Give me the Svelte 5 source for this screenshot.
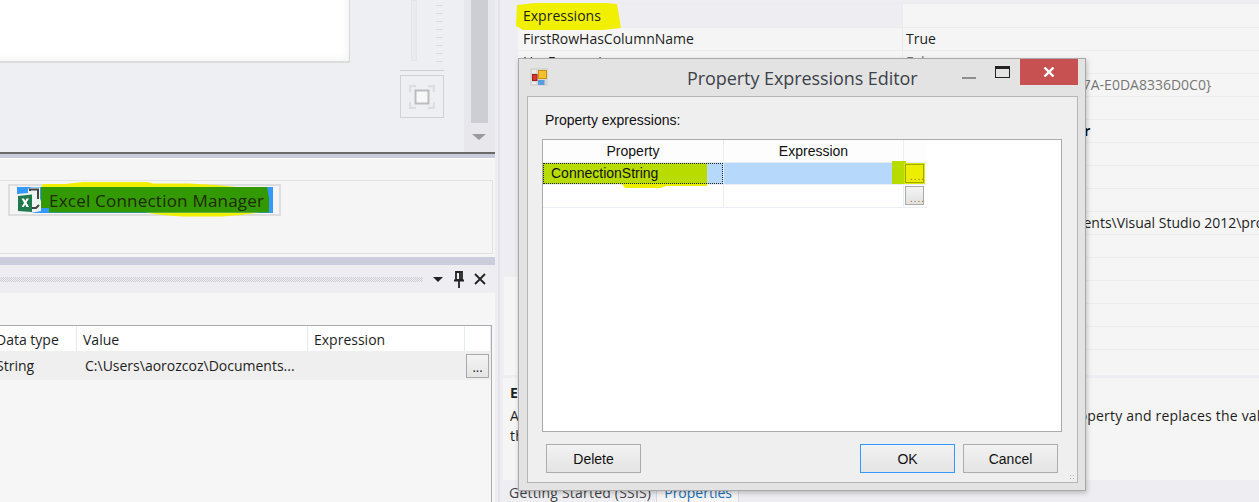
<script>
	const props = [
		{ name: 'Expressions', value: '', cat: true },
		{ name: 'FirstRowHasColumnName', value: 'True' },
		{ name: 'HasExpressions', value: 'False', dim: true },
		{ name: '', value: '{6C2F7B10-93D4-4E1B-A77A-E0DA8336D0C0}', dim: true, shift: true },
		{ name: '', value: '' },
		{ name: '', value: 'Excel Connection Manager', bold: true },
		{ name: '', value: '' },
		{ name: '', value: '' },
		{ name: '', value: '' },
		{ name: '', value: 'C:\\Users\\aorozcoz\\Documents\\Visual Studio 2012\\projects\\Integration', shift: true },
		{ name: '', value: '' },
		{ name: '', value: '' },
		{ name: '', value: '' },
		{ name: '', value: '' },
		{ name: '', value: '' },
		{ name: '', value: '' }
	];
</script>

<div class="page">
	<section class="left">
		<div class="designer">
			<div class="canvas-area">
				<div class="canvas"></div>
			</div>
			<div class="zoom-rail">
				<div class="slider"><span class="track"></span><span class="ticks"></span></div>
				<div class="zoom-btn">
					<svg width="26" height="24" viewBox="0 0 26 24">
						<path d="M1 7V1h6M19 1h6v6M25 17v6h-6M7 23H1v-6" fill="none" stroke="#dcdde0" stroke-width="2.5" />
						<rect x="6.5" y="5.5" width="13" height="13" fill="#f8f8f8" stroke="#bcbdc1" stroke-width="2" />
					</svg>
				</div>
			</div>
			<div class="vscroll">
				<div class="thumb"></div>
				<div class="arrow"></div>
			</div>
		</div>
		<div class="split-bar"></div>
		<div class="tray">
			<div class="tray-inner">
				<div class="tray-item">
					<div class="tray-sel">
						<svg class="xl" width="24" height="26" viewBox="0 0 24 26">
							<path d="M0 7L11 6V2L14 0.500H23V12L24 14V24L14 26H0Z" fill="#eef3f1" />
							<path d="M13 4V2.500h8V12M15 21h4l3-3" fill="none" stroke="#444" stroke-width="2" />
							<path d="M1 9L15 7.500V25L1 24Z" fill="#1f7a4d" />
							<path d="M4.500 11.500h2.500l1.200 2.300 1.300-2.300H12l-2.500 4 2.500 4.500H9.500L8.200 17.500 6.800 20H4.500L7 15.700z" fill="#fff" />
						</svg>
						<div class="tray-label">
							<svg class="marker" width="232" height="36" viewBox="0 0 232 36">
								<path d="M0 5L2 2H24L42 0H107L112 1.500H148L175 3 195 5Z" fill="#f0f000" />
								<path d="M104 30.500H219L200 33 181 34.500H141L121 33Z" fill="#f0f000" />
								<path d="M0 5H226L228 16V30.500H8V26H0Z" fill="#339900" />
							</svg>
							<span>Excel Connection Manager</span>
						</div>
					</div>
				</div>
			</div>
		</div>
		<div class="split-bar thick"></div>
		<div class="panel-head">
			<div class="grip"></div>
			<span class="drop"></span>
			<svg width="12" height="17" viewBox="0 0 12 17"><path d="M3 1h6v8H3zM1 9.500h10M6 10v7M7 2v7" fill="none" stroke="#222" stroke-width="1.800" /></svg>
			<svg width="12" height="12" viewBox="0 0 12 12"><path d="M1 1l10 10M11 1L1 11" stroke="#222" stroke-width="1.800" /></svg>
		</div>
		<div class="panel-body">
			<div class="var-grid">
				<div class="var-head">
					<div class="c1">Data type</div>
					<div class="c2">Value</div>
					<div class="c3">Expression</div>
					<div class="c4"></div>
				</div>
				<div class="var-row">
					<div class="c1">String</div>
					<div class="c2">C:\Users\aorozcoz\Documents...</div>
					<div class="c3"></div>
					<div class="c4"><button class="dots">...</button></div>
				</div>
			</div>
		</div>
	</section>

	<section class="right">
		<div class="grid">
			{#each props as p}
				<div class="prop" class:cat={p.cat}>
					<div class="pname">
						{#if p.cat}
							<svg class="cat-mark" width="108" height="28" viewBox="0 0 108 28">
								<path d="M2 3L20 1H90L102 2 106 26 88 28H8L1 24Z" fill="#f0f000" />
							</svg>
						{/if}
						<span>{p.name}</span>
					</div>
					<div class="pval" class:dim={p.dim} class:bold={p.bold} class:shift={p.shift}>{p.value}</div>
				</div>
			{/each}
		</div>
		<div class="desc">
			<strong>Expressions</strong>
			<p>A property expression updates values of the property at run time. It evaluates this property and replaces the value</p>
			<p>that was set for the property when the package runs.</p>
		</div>
		<div class="tabs">
			<span class="tab">Getting Started (SSIS)</span>
			<span class="tab active">Properties</span>
		</div>
	</section>

	<div class="dialog">
		<header class="titlebar">
			<svg class="app-icon" width="18" height="18" viewBox="0 0 18 18">
				<rect width="18" height="18" fill="#d6d6d6" />
				<rect x="2" y="2" width="4" height="3" fill="#ececec" />
				<rect x="2" y="14" width="4" height="2" fill="#ececec" />
				<rect x="8.500" y="2.500" width="8" height="8" fill="#f5c02c" stroke="#c8920c" />
				<rect x="2.500" y="6.500" width="4.500" height="6" fill="#d8352c" stroke="#a02018" />
				<rect x="8" y="12" width="6.500" height="5" fill="#5b9be0" />
			</svg>
			<h2>Property Expressions Editor</h2>
			<div class="win-btns">
				<span class="min"></span>
				<span class="max"></span>
				<button class="close">
					<svg width="12" height="10" viewBox="0 0 12 10"><path d="M1.500 0.500l9 9M10.500 0.500l-9 9" stroke="#fff" stroke-width="2.400" /></svg>
				</button>
			</div>
		</header>
		<div class="dlg-body">
			<label for="exprs">Property expressions:</label>
			<div class="expr-table" id="exprs">
				<div class="erow ehead">
					<div class="e1">Property</div>
					<div class="e2">Expression</div>
					<div class="e3"></div>
				</div>
				<div class="erow esel">
					<div class="e1 selcell">
						<span class="lime"></span>
						<span class="ring"></span>
						<span class="etext">ConnectionString</span>
					</div>
					<div class="e2 blue"><span class="lime-end"></span></div>
					<div class="e3"><button class="ell hot">....</button></div>
				</div>
				<div class="erow">
					<div class="e1"></div>
					<div class="e2"></div>
					<div class="e3"><button class="ell">....</button></div>
				</div>
			</div>
			<div class="dlg-actions">
				<button class="btn">Delete</button>
				<div class="spacer"></div>
				<button class="btn primary">OK</button>
				<button class="btn">Cancel</button>
			</div>
			<div class="resize"></div>
		</div>
	</div>
</div>

<style>
	:global(body) {
		margin: 0;
		background: #eeeef2;
	}

	.page {
		position: relative;
		display: flex;
		width: 1259px;
		height: 502px;
		overflow: hidden;
		font-family: 'Open Sans', sans-serif;
		font-size: 13px;
		color: #1e1e1e;
	}

	.left {
		width: 495px;
		flex: none;
		display: flex;
		flex-direction: column;
		background: #f5f5f5;
	}

	.designer {
		height: 152px;
		flex: none;
		display: flex;
		background: #eeeff2;
		border-bottom: 2px solid #6a6a6a;
	}

	.canvas-area {
		width: 400px;
		flex: none;
	}

	.canvas {
		width: 349px;
		height: 61px;
		background: #fff;
		border-right: 1px solid #d9d9d9;
		border-bottom: 2px solid #dcdcdc;
		box-shadow: inset -8px -8px 8px -8px #eeeeee;
	}

	.zoom-rail {
		width: 44px;
		flex: none;
		display: flex;
		flex-direction: column;
	}

	.slider {
		height: 62px;
		display: flex;
		justify-content: space-between;
		padding: 0 1px 8px 11px;
		border-bottom: 1px solid #cfd0d3;
		margin-bottom: 4px;
	}

	.track {
		width: 6px;
		height: 61px;
		background: #e9ebec;
		border: 1px solid #e3e6e6;
		box-sizing: border-box;
	}

	.ticks {
		width: 7px;
		height: 62px;
		background: repeating-linear-gradient(to top, #dcdcdc 0 1px, transparent 1px 8px);
	}

	.zoom-btn {
		height: 41px;
		width: 42px;
		border: 1px solid #d0d1d4;
		display: flex;
		align-items: center;
		justify-content: center;
	}

	.vscroll {
		margin-left: 20px;
		width: 31px;
		flex: none;
		background: #e8e8ec;
		padding: 0 7px;
		box-sizing: border-box;
	}

	.thumb {
		height: 123px;
		background: #cdced3;
	}

	.arrow {
		width: 0;
		margin: 11px 0 0 1px;
		border: 7px solid transparent;
		border-top: 6px solid #9a9a9e;
		border-bottom: 0;
	}

	.split-bar {
		height: 4px;
		flex: none;
		background: #c8ccdb;
		border-bottom: 1px solid #fff;
	}

	.split-bar.thick {
		height: 8px;
		border-bottom: 0;
		background: #cbcddd;
	}

	.tray {
		height: 98px;
		flex: none;
		padding-top: 21px;
		box-sizing: border-box;
	}

	.tray-inner {
		height: 74px;
		width: 493px;
		box-sizing: border-box;
		border: 1px solid #e2e2e2;
		border-left: 0;
		padding: 3px 0 0 8px;
	}

	.tray-item {
		width: 273px;
		height: 32px;
		box-sizing: border-box;
		border: 2px solid #dedede;
		padding: 1px 6px 0 7px;
	}

	.tray-sel {
		height: 26px;
		background: #3399ff;
		display: flex;
	}

	.xl {
		flex: none;
	}

	.tray-label {
		position: relative;
		font-size: 17px;
		line-height: 27px;
		padding-left: 8px;
		color: #1f2a00;
		white-space: nowrap;
		letter-spacing: 0.22px;
	}

	.tray-label span {
		position: relative;
	}

	.marker {
		position: absolute;
		left: 0;
		top: -5px;
	}

	.panel-head {
		height: 28px;
		flex: none;
		display: flex;
		align-items: center;
		background: #eeeef2;
		padding-right: 9px;
		gap: 9px;
	}

	.grip {
		width: 423px;
		height: 5px;
		margin-right: auto;
		background: repeating-conic-gradient(#cfd0d5 0 25%, transparent 0 50%) 0 0 / 2px 2px;
	}

	.drop {
		margin-right: 1px;
		border: 5px solid transparent;
		border-top: 5px solid #222;
		border-bottom: 0;
	}

	.panel-body {
		flex: 1;
		background: #f6f6f6;
		padding-top: 32px;
		min-height: 0;
	}

	.var-grid {
		width: 492px;
		height: 200px;
		box-sizing: border-box;
		border: 1px solid #ababab;
		border-left: 0;
		font-size: 14px;
	}

	.var-head,
	.var-row {
		display: flex;
	}

	.var-head {
		height: 25px;
		background: #fff;
		line-height: 27px;
	}

	.var-head > div {
		border-right: 1px solid #e4ecf6;
	}

	.var-row {
		height: 29px;
		background: #efefef;
		line-height: 29px;
	}

	.c1 {
		width: 76px;
		text-indent: -4px;
		white-space: nowrap;
		overflow: hidden;
	}

	.c2 {
		width: 231px;
		padding-left: 6px;
		box-sizing: border-box;
		white-space: nowrap;
	}

	.var-row .c2 {
		padding-left: 9px;
	}

	.c3 {
		width: 157px;
		padding-left: 6px;
		box-sizing: border-box;
	}

	.c4 {
		flex: 1;
	}

	.dots {
		display: block;
		width: 23px;
		height: 24px;
		margin: 3px 0 0 2px;
		padding: 0;
		border: 1px solid #a9a9a9;
		background: linear-gradient(#f4f4f4, #e4e4e4);
		font: 13px/24px 'Open Sans', sans-serif;
		color: #222;
	}

	.right {
		flex: 1;
		min-width: 0;
		display: flex;
		flex-direction: column;
		background: linear-gradient(to right, #eeeef2 3px, #e3e3eb 3px 5px, #eeeef2 5px);
		padding-left: 9px;
	}

	.grid {
		height: 375px;
		flex: none;
		padding: 3px 0 0 14px;
		box-sizing: border-box;
		background: linear-gradient(#eeeef2 277px, #f5f5f5 277px);
		overflow: hidden;
	}

	.prop {
		display: flex;
		height: 23px;
		box-sizing: border-box;
		border-top: 1px solid #ececee;
		background: #f5f5f5;
		line-height: 22px;
		font-size: 14px;
		white-space: nowrap;
	}

	.prop.cat {
		height: 24px;
		line-height: 24px;
	}

	.prop.cat .pname {
		background: #eeeef2;
	}

	.pname {
		position: relative;
		width: 385px;
		flex: none;
		padding-left: 5px;
		box-sizing: border-box;
		border-right: 1px solid #ececee;
	}

	.pname span {
		position: relative;
	}

	.cat-mark {
		position: absolute;
		left: -3px;
		top: -2px;
	}

	.pval {
		padding-left: 3px;
	}

	.pval.shift {
		padding-left: 10px;
	}

	.pval.dim {
		color: #777;
	}

	.pval.dim.shift {
		padding-left: 12px;
	}

	.pval.bold {
		font-weight: 700;
		color: #111;
	}

	.desc {
		margin-top: 3px;
		height: 102px;
		flex: none;
		background: #f5f5f5;
		padding: 5px 0 0 7px;
		margin-left: -1px;
		box-sizing: border-box;
		font-size: 14px;
		white-space: nowrap;
		overflow: hidden;
	}

	.desc strong {
		display: block;
		line-height: 20px;
		margin-bottom: 3px;
	}

	.desc p {
		margin: 0;
		line-height: 20px;
		letter-spacing: 0.2px;
	}

	.tabs {
		flex: 1;
		display: flex;
		padding-left: 6px;
		margin-left: -1px;
		font-size: 14px;
	}

	.tab {
		padding: 3px 5px 0 0;
		color: #444;
		white-space: nowrap;
		letter-spacing: 0.2px;
	}

	.tab.active {
		padding: 3px 6px 0 7px;
		background: #f5f5f5;
		color: #1a6fb5;
		border: 1px solid #d8d8de;
		border-top: 0;
		letter-spacing: 0;
	}

	.dialog {
		position: absolute;
		left: 518px;
		top: 58px;
		width: 568px;
		height: 433px;
		box-sizing: border-box;
		background: #e3e3e3;
		border: 1px solid #a8a8a8;
		box-shadow: 1px 2px 5px rgba(0, 0, 0, 0.22);
		display: flex;
		flex-direction: column;
		padding: 0 7px 7px 8px;
		font-family: 'Liberation Sans', sans-serif;
		font-size: 14px;
	}

	.titlebar {
		height: 37px;
		flex: none;
		display: flex;
		align-items: flex-start;
	}

	.app-icon {
		margin: 9px 0 0 3px;
		flex: none;
	}

	.titlebar h2 {
		flex: 1;
		margin: 7px 0 0 139px;
		font: 400 18px/24px 'Open Sans', sans-serif;
		letter-spacing: -0.07px;
		color: #3c4249;
		white-space: nowrap;
	}

	.win-btns {
		display: flex;
		align-items: flex-start;
		flex: none;
	}

	.min {
		width: 14px;
		height: 2px;
		background: #8f8f8f;
		margin: 18px 19px 0 0;
	}

	.max {
		width: 13px;
		height: 8px;
		border: 1px solid #222;
		border-top-width: 3px;
		margin: 7px 10px 0 0;
	}

	.close {
		width: 58px;
		height: 26px;
		padding: 0;
		border: 0;
		background: #c75050;
		display: flex;
		align-items: center;
		justify-content: center;
	}

	.dlg-body {
		flex: 1;
		position: relative;
		background: #efefef;
		border: 1px solid #b5b5b5;
		padding: 16px 15px 0 14px;
		min-height: 0;
	}

	label {
		display: block;
		line-height: 15px;
		color: #111;
		margin: 0 0 11px 3px;
	}

	.expr-table {
		height: 293px;
		box-sizing: border-box;
		border: 1px solid #ababab;
		background: #fff;
		color: #111;
	}

	.erow {
		display: flex;
		height: 22px;
		border-bottom: 1px solid #ecf0f6;
		width: 384px;
	}

	.ehead {
		border-bottom-color: #e6ecf4;
	}

	.ehead > div {
		text-align: center;
		line-height: 23px;
		background: #fdfdfd;
	}

	.e1,
	.e2 {
		width: 180px;
		flex: none;
		box-sizing: border-box;
		border-right: 1px solid #e8eef6;
		position: relative;
	}

	.e1 {
		width: 181px;
	}

	.e3 {
		flex: 1;
	}

	.esel {
		height: 21px;
	}

	.selcell,
	.blue {
		background: #b6d8fb;
	}

	.lime {
		position: absolute;
		left: 0;
		top: 0;
		width: 164px;
		height: 25px;
		background: linear-gradient(#b9dc00 21px, #eded00 21px);
		clip-path: polygon(0 0, 100% 0, 100% 92%, 75% 92%, 72% 100%, 50% 100%, 48% 84%, 0 84%);
	}

	.ring {
		position: absolute;
		inset: 0;
		border: 1px dotted #222;
	}

	.etext {
		position: absolute;
		left: 8px;
		top: 3px;
		line-height: 15px;
	}

	.lime-end {
		position: absolute;
		right: -3px;
		top: -2px;
		width: 14px;
		height: 23px;
		background: #b9dc00;
	}

	.ell {
		display: block;
		position: relative;
		width: 19px;
		height: 19px;
		margin: 1px 0 0 1px;
		padding: 0 0 0 4px;
		border: 1px solid #aaa;
		background: linear-gradient(#f4f4f4, #e2e2e2);
		font: 10px/23px 'Liberation Sans', sans-serif;
		letter-spacing: 1px;
		color: #a86400;
		text-align: center;
		overflow: hidden;
	}

	.ell.hot {
		background: #eded00;
		border-color: #9ea900;
		outline: 1px solid #d8e800;
	}

	.dlg-actions {
		display: flex;
		margin: 12px 4px 0;
		gap: 8px;
	}

	.spacer {
		flex: 1;
	}

	.btn {
		width: 95px;
		height: 29px;
		padding: 0;
		border: 1px solid #adadad;
		background: linear-gradient(#f2f2f2, #e4e4e4);
		font: 14px 'Liberation Sans', sans-serif;
		color: #111;
	}

	.btn.primary {
		border-color: #3399ff;
	}

	.resize {
		position: absolute;
		right: 1px;
		bottom: 1px;
		width: 7px;
		height: 7px;
		background: radial-gradient(#b5b5b5 0.9px, transparent 1px) 0 0 / 3px 3px;
	}
</style>
